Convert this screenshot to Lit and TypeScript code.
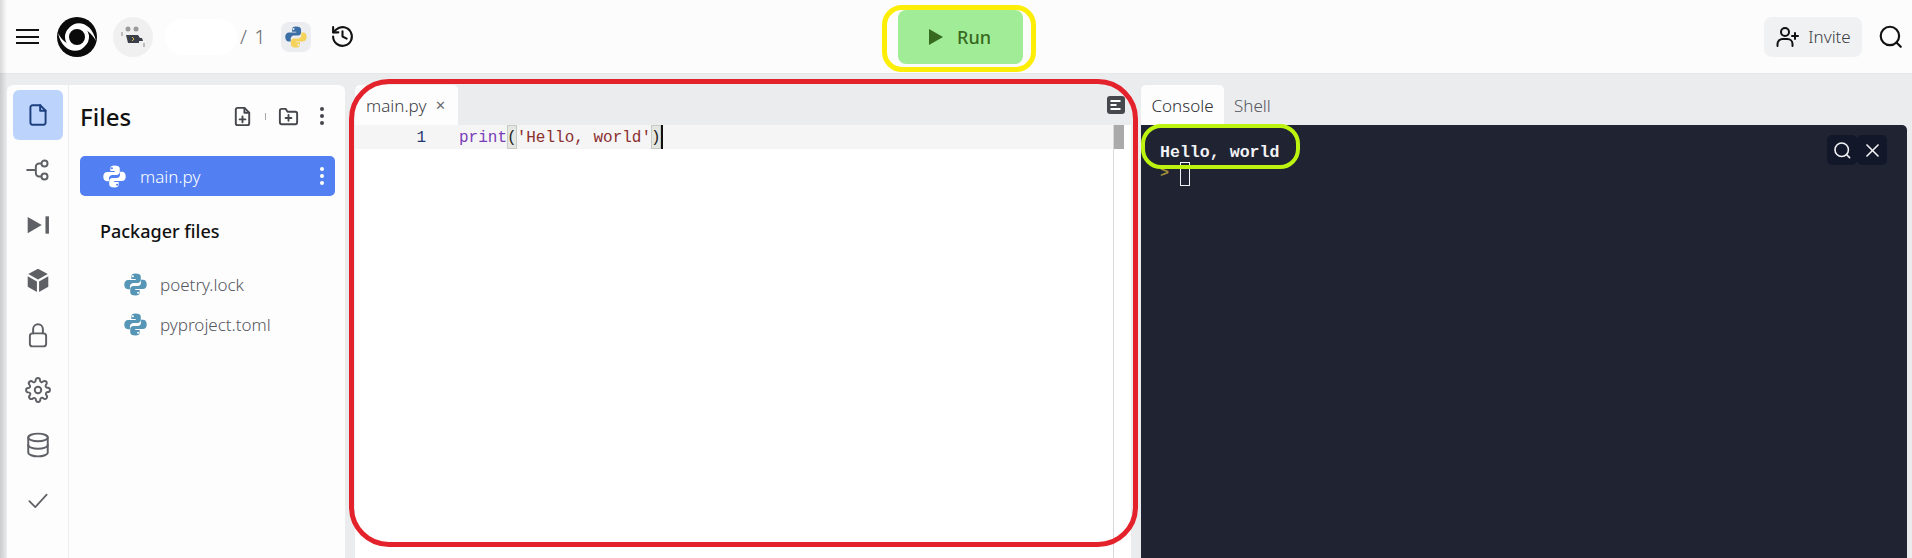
import { LitElement, html, css, svg } from "lit";
import { customElement } from "lit/decorators.js";

const snake = "M11.900.5C8.900.5 7.700 1.800 7.700 3.600V6.300H12.300V7.200H4.400C2 7.200.3 9 .3 12c0 3 1.500 4.900 3.800 4.900H6.200V13.900C6.200 11.900 7.900 10.400 9.800 10.400H14.400C16.100 10.400 17.500 9 17.500 7.300V3.600C17.500 1.800 15.500.5 11.900.5ZM9.300 2.300A1.100 1.100 0 1 1 9.300 4.500 1.100 1.100 0 1 1 9.300 2.300Z";

const python = (a: string, b: string, size: number) => html`<svg class="py" width=${size} height=${size} viewBox="0 0 24 24">
  <path fill=${a} fill-rule="evenodd" d=${snake}/>
  <path fill=${b} fill-rule="evenodd" transform="rotate(180 12 12)" d=${snake}/>
</svg>`;

const ico = (body: unknown, size = 24, sw = 2) => html`<svg width=${size} height=${size} viewBox="0 0 24 24" fill="none" stroke="currentColor" stroke-width=${sw} stroke-linecap="round" stroke-linejoin="round">${body}</svg>`;

const kebab = html`<svg width="24" height="24" viewBox="0 0 24 24" fill="currentColor"><circle cx="12" cy="5" r="2"/><circle cx="12" cy="12" r="2"/><circle cx="12" cy="19" r="2"/></svg>`;

const sideIcons = [
  svg`<path d="M14 3H7a2 2 0 0 0-2 2v14a2 2 0 0 0 2 2h10a2 2 0 0 0 2-2V8l-5-5Z"/><path d="M14 3v5h5" />`,
  svg`<circle cx="18" cy="6" r="2.800"/><circle cx="18" cy="18" r="2.800"/><path d="M2 12h7"/><path d="M15 6h-2a3 3 0 0 0-3 3v6a3 3 0 0 0 3 3h2"/>`,
  svg`<path d="M2.500 4.500l13 7.500-13 7.500Z" fill="currentColor" stroke="none"/><path d="M20.500 4v16" stroke-width="3.200" stroke-linecap="butt"/>`,
  svg`<path d="M12 1.500l9 5-9 5-9-5Z" fill="currentColor" stroke="none"/><path d="M2.500 8.500l8.500 4.800v9.700l-8.500-4.800ZM21.500 8.500l-8.500 4.800v9.700l8.500-4.800Z" fill="currentColor" stroke="none"/>`,
  svg`<rect x="4.500" y="10.500" width="15" height="12" rx="2.500"/><path d="M7.500 10.500V6.500a4.500 4.500 0 0 1 9 0v4"/>`,
  svg`<circle cx="12" cy="12" r="3"/><path d="M19.400 15a1.650 1.650 0 0 0 .33 1.820l.06.06a2 2 0 1 1-2.830 2.830l-.06-.06a1.650 1.650 0 0 0-2.800 1.170V21a2 2 0 0 1-4 0v-.09A1.650 1.650 0 0 0 7.300 19.800l-.06.06a2 2 0 1 1-2.830-2.830l.06-.06a1.650 1.650 0 0 0-1.170-2.800H3a2 2 0 0 1 0-4h.09A1.650 1.650 0 0 0 4.200 7.300l-.06-.06a2 2 0 1 1 2.830-2.830l.06.06a1.650 1.650 0 0 0 2.800-1.170V3a2 2 0 0 1 4 0v.09a1.650 1.650 0 0 0 2.800 1.170l.06-.06a2 2 0 1 1 2.830 2.830l-.06.06a1.650 1.650 0 0 0 1.170 2.800H21a2 2 0 0 1 0 4h-.09a1.650 1.650 0 0 0-1.510 1Z"/>`,
  svg`<ellipse cx="12" cy="5" rx="9" ry="3.500"/><path d="M3 5v14c0 1.900 4 3.500 9 3.500s9-1.600 9-3.500V5"/><path d="M3 12c0 1.900 4 3.500 9 3.500s9-1.600 9-3.500"/>`,
  svg`<path d="M4 13l5.500 5.500L20 7"/>`,
];

@customElement("app-root")
export class AppRoot extends LitElement {
  static styles = css`
    :host { display: block; position: relative; width: 1912px; height: 558px; overflow: hidden; background: #ebecee; font-family: "Noto Sans", sans-serif; color: #3c3e45; }
    header { height: 74px; box-sizing: border-box; background: #fcfcfc; border-bottom: 1px solid #e6e7e9; display: grid; grid-template-columns: 1fr auto 1fr; align-items: center; padding: 0 8px 0 16px; }
    .hl, .hr { display: flex; align-items: center; }
    .hr { justify-content: flex-end; color: #1a1b1f; }
    .ham { width: 23px; height: 15px; border-top: 2px solid #111; border-bottom: 2px solid #111; position: relative; box-sizing: border-box; margin-right: 18px; }
    .ham::after { content: ""; position: absolute; left: 0; right: 0; top: 4.500px; height: 2px; background: #111; }
    .avatar { width: 40px; height: 40px; border-radius: 50%; background: #f0f0f1; margin-left: 16px; display: flex; align-items: center; justify-content: center; }
    .blur { width: 72px; height: 36px; background: #fff; border-radius: 18px; margin-left: 12px; }
    .count { font-size: 20px; color: #6a6c73; margin-left: 3px; letter-spacing: 1px; font-weight: 300; }
    .pytile { width: 30px; height: 30px; border-radius: 8px; background: #ebedf0; margin-left: 14px; display: flex; align-items: center; justify-content: center; }
    .hist { margin-left: 19px; display: flex; color: #111; }
    .run { width: 125px; height: 54px; background: #a1ec96; border-radius: 8px; display: flex; align-items: center; justify-content: center; gap: 13px; color: #37691f; font-size: 18px; font-weight: 500; box-sizing: border-box; padding-right: 1px; }
    .invite { width: 98px; height: 40px; background: #f0f1f2; border-radius: 8px; display: flex; align-items: center; justify-content: center; gap: 9px; font-size: 17px; font-weight: 300; color: #3c3e45; }
    .invite svg { color: #111; }
    .hsearch { margin-left: 16px; display: flex; color: #111; }

    main { display: flex; height: 484px; padding: 11px 5px 0 7px; box-sizing: border-box; }
    .left { width: 338px; flex: none; background: #fdfdfd; border-radius: 6px 6px 0 0; display: flex; }
    .rail { width: 62px; flex: none; border-right: 1px solid #eceded; box-sizing: border-box; display: flex; flex-direction: column; align-items: center; padding-top: 5px; gap: 5px; color: #5f6066; }
    .rail div { width: 50px; height: 50px; display: flex; align-items: center; justify-content: center; border-radius: 6px; }
    .rail div.on { background: #bcd4fb; color: #1d3f7f; }
    .files { flex: 1; padding: 0 10px 0 11px; min-width: 0; }
    .fhead { display: flex; align-items: center; height: 62px; color: #45474d; margin-bottom: 2px; }
    .fhead h1 { margin: 0 auto 0 0; font-size: 24px; font-weight: 500; color: #111; }
    .fhead svg { display: block; }
    .sep { width: 1px; height: 7px; background: #a7a8ac; margin: 0 11px; }
    .kb { margin-left: 10px; margin-right: 1px; display: flex; }
    .row { height: 40px; margin-top: 9px; background: #5280f2; color: #fff; border-radius: 5px; display: flex; align-items: center; padding-left: 23px; font-size: 17px; font-weight: 300; gap: 14px; }
    .row .kb { margin-left: auto; }
    .pk { font-size: 18px; font-weight: 500; color: #111; margin: 22px 0 0 20px; height: 26px; line-height: 26px; }
    .f { display: flex; align-items: center; height: 40px; gap: 13px; font-size: 17px; font-weight: 300; padding-left: 44px; color: #55575e; }
    .pk + .f { margin-top: 20px; }

    .ed { width: 776px; flex: none; margin-left: 10px; display: flex; flex-direction: column; }
    .tabs { height: 40px; display: flex; flex: none; align-items: flex-end; }
    .tab { height: 40px; border-radius: 5px 5px 0 0; display: flex; align-items: center; box-sizing: border-box; font-size: 17px; font-weight: 300; color: #3c3e45; }
    .ed .tab { width: 103px; padding-left: 11px; gap: 9px; background: #fdfdfd; }
    .x { font-size: 13px; color: #6a6c73; }
    .outline { margin-left: auto; margin-right: 5px; align-self: center; display: flex; }
    .code { flex: 1; background: #fff; position: relative; }
    .line { height: 24px; background: #f5f5f6; display: flex; font: 16px/26px "Liberation Mono", monospace; margin-right: 17px; }
    .ln { width: 71px; text-align: right; color: #25386f; flex: none; box-sizing: border-box; }
    .src { padding-left: 33px; display: flex; color: #8b2f2f; }
    .kw { color: #7a3db8; }
    .pa { height: 24px; color: #222; background: #e4e6e1; outline: 1px solid #c8cac6; outline-offset: -1px; }
    .caret { width: 2px; height: 24px; background: #111; }
    .vline { position: absolute; top: 0; bottom: 0; right: 17px; width: 1px; background: #d8d8d8; }
    .thumb { position: absolute; top: 0; right: 7px; width: 10px; height: 24px; background: #aaa; }

    .con { flex: 1; margin-left: 10px; display: flex; flex-direction: column; min-width: 0; }
    .con .tab { padding: 0 10px; color: #55575e; }
    .con .tab.on { width: 83px; justify-content: center; padding: 0; color: #2e3036; background: #fdfdfd; }
    .term { flex: 1; background: #1f2332; border-top-right-radius: 5px; position: relative; padding: 16px 19px; font: 700 16.600px/24px "Liberation Mono", monospace; color: #f1f2f5; }
    .prompt { display: flex; align-items: center; gap: 11px; height: 24px; margin-top: -3px; color: #a5913a; font-size: 15px; }
    .cursor { width: 10px; height: 24px; border: 1px solid #f1f2f5; box-sizing: border-box; }
    .tbtns { position: absolute; top: 10px; right: 20px; display: flex; color: #f2f3f5; }
    .tbtns div { width: 30px; height: 30px; background: #13172a; border-radius: 5px; display: flex; align-items: center; justify-content: center; }

    .mark { position: absolute; box-sizing: border-box; pointer-events: none; }
    .shade { left: 0; top: 0; bottom: 0; width: 7px; background: linear-gradient(90deg, rgba(0,0,0,.14), rgba(0,0,0,0)); }
    .m-red { left: 349px; top: 79px; width: 789px; height: 468px; border: 5px solid #e3222b; border-radius: 40px; }
    .m-yel { left: 882px; top: 5px; width: 154px; height: 67px; border: 5px solid #fdee07; border-radius: 20px; }
    .m-grn { left: 1141px; top: 124px; width: 159px; height: 45px; border: 4.500px solid #bdf40f; border-radius: 20px; }
  `;

  render() {
    return html`
      <header>
        <div class="hl">
          <div class="ham"></div>
          <svg width="40" height="40" viewBox="0 0 40 40">
            <circle cx="20" cy="20" r="20" fill="#0a0a0a"/>
            <circle cx="20" cy="20" r="10" fill="none" stroke="#fff" stroke-width="4"/>
            <path d="M12 11C19 2 35 5 39 24 34 14 24 8 12 11Z" fill="#fff"/>
            <path d="M28 29C21 38 5 35 1 16 6 26 16 32 28 29Z" fill="#fff"/>
            <circle cx="20" cy="20" r="5.500" fill="#0a0a0a"/>
          </svg>
          <div class="avatar">
            <svg width="26" height="26" viewBox="0 0 26 26">
              <circle cx="8" cy="5" r="2.500" fill="#9a9a9a"/><circle cx="16" cy="5" r="2.500" fill="#9a9a9a"/>
              <path d="M6 11h12l2 3h2l1 3h-4v2H8Z" fill="#3b3f4a"/><path d="M12 13l2 2-2 2" stroke="#d8c24a" fill="none"/>
              <path d="M2 8v4M24 19v4" stroke="#888"/>
            </svg>
          </div>
          <div class="blur"></div>
          <div class="count">/ 1</div>
          <div class="pytile">${python("#3b6ea5", "#f5d25a", 22)}</div>
          <div class="hist">${ico(svg`<path d="M3 12a9 9 0 1 0 3-6.700L3 8"/><path d="M3 3v5h5"/><path d="M12 7v5l4 2"/>`, 25)}</div>
        </div>
        <div class="run">
          <svg width="16" height="18" viewBox="0 0 16 18"><path d="M1 1l14 8-14 8Z" fill="#37691f"/></svg>
          Run
        </div>
        <div class="hr">
          <div class="invite">
            ${ico(svg`<circle cx="10" cy="7" r="4"/><path d="M2.500 21v-2a5 5 0 0 1 5-5h5a5 5 0 0 1 5 5v2"/><path d="M20 8v6M17 11h6"/>`, 24)}
            Invite
          </div>
          <div class="hsearch">${ico(svg`<circle cx="11" cy="11" r="8.500"/><path d="M21 21l-4-4"/>`, 26)}</div>
        </div>
      </header>
      <main>
        <section class="left">
          <nav class="rail">
            ${sideIcons.map((s, i) => html`<div class=${i === 0 ? "on" : ""}>${ico(s, 26, i === 7 ? 1.6 : 1.8)}</div>`)}
          </nav>
          <div class="files">
            <div class="fhead">
              <h1>Files</h1>
              ${ico(svg`<path d="M14 3H7a2 2 0 0 0-2 2v14a2 2 0 0 0 2 2h10a2 2 0 0 0 2-2V8l-5-5Z"/><path d="M14 3v5h5"/><path d="M12 12v6M9 15h6"/>`, 23)}
              <span class="sep"></span>
              ${ico(svg`<path d="M3 6a2 2 0 0 1 2-2h4l2 3h8a2 2 0 0 1 2 2v9a2 2 0 0 1-2 2H5a2 2 0 0 1-2-2Z"/><path d="M12 10.500v6M9 13.500h6"/>`, 23)}
              <span class="kb">${kebab}</span>
            </div>
            <div class="row">
              ${python("#fff", "#fff", 23)}
              <span>main.py</span>
              <span class="kb">${kebab}</span>
            </div>
            <div class="pk">Packager files</div>
            <div class="f">${python("#5595b5", "#5595b5", 23)}<span>poetry.lock</span></div>
            <div class="f">${python("#5595b5", "#5595b5", 23)}<span>pyproject.toml</span></div>
          </div>
        </section>
        <section class="ed">
          <div class="tabs">
            <div class="tab">main.py <span class="x">✕</span></div>
            <div class="outline">
              <svg width="20" height="20" viewBox="0 0 20 20"><rect x="1" y="1" width="18" height="18" rx="3" fill="#45474d"/><path d="M4.500 6h10M4.500 10h6M4.500 14h10" stroke="#fff" stroke-width="2"/></svg>
            </div>
          </div>
          <div class="code">
            <div class="line">
              <div class="ln">1</div>
              <div class="src"><span class="kw">print</span><span class="pa">(</span><span>'Hello, world'</span><span class="pa">)</span><span class="caret"></span></div>
            </div>
            <div class="vline"></div>
            <div class="thumb"></div>
          </div>
        </section>
        <section class="con">
          <div class="tabs">
            <div class="tab on">Console</div>
            <div class="tab">Shell</div>
          </div>
          <div class="term">
            <div>Hello, world</div>
            <div class="prompt"><span>&gt;</span><span class="cursor"></span></div>
            <div class="tbtns">
              <div>${ico(svg`<circle cx="11" cy="11" r="8.500"/><path d="M21 21l-4-4"/>`, 19)}</div>
              <div>${ico(svg`<path d="M5 5l14 14M19 5L5 19"/>`, 19)}</div>
            </div>
          </div>
        </section>
      </main>
      <div class="mark shade"></div>
      <div class="mark m-red"></div>
      <div class="mark m-yel"></div>
      <div class="mark m-grn"></div>
    `;
  }
}
